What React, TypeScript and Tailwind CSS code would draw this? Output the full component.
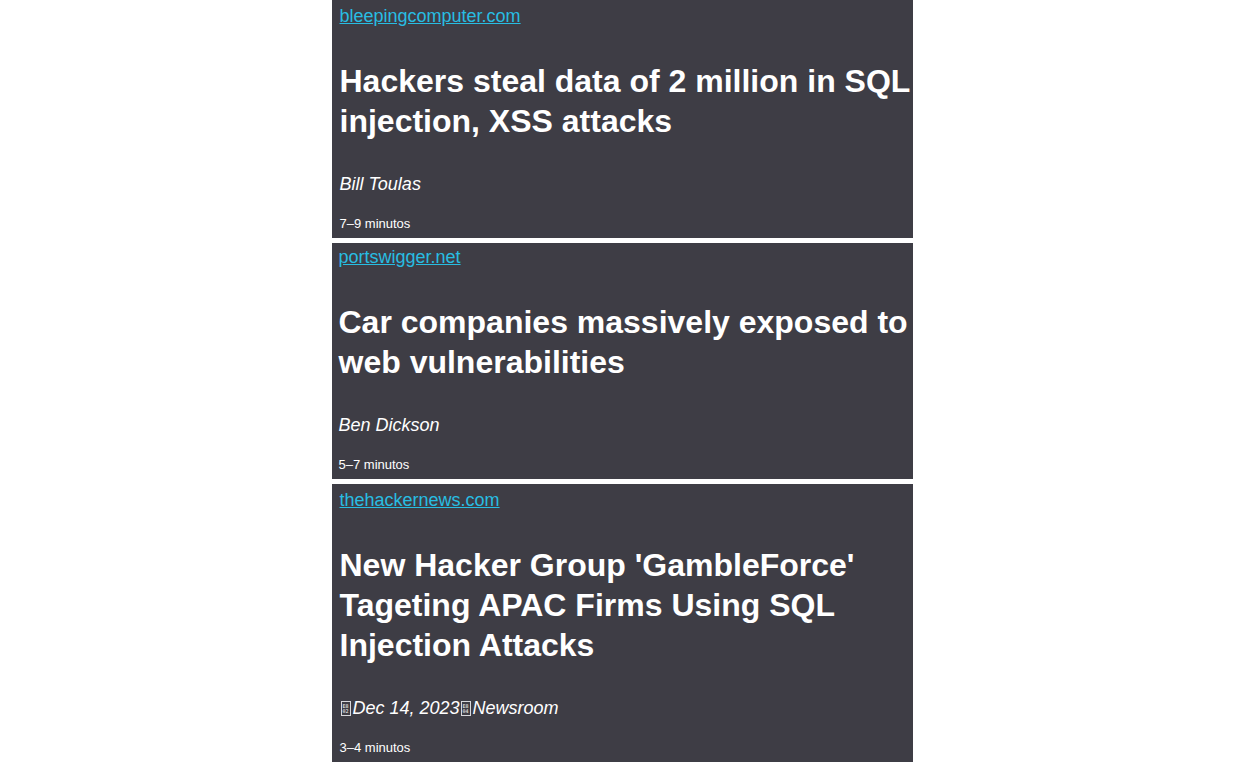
const articles = [
  {
    site: "bleepingcomputer.com",
    title: "Hackers steal data of 2 million in SQL injection, XSS attacks",
    byline: ["Bill Toulas"],
    time: "7–9 minutos",
    top: "pt-[6px]",
    left: "pl-2",
  },
  {
    site: "portswigger.net",
    title: "Car companies massively exposed to web vulnerabilities",
    byline: ["Ben Dickson"],
    time: "5–7 minutos",
    top: "pt-[4px]",
    left: "pl-[7px]",
  },
  {
    site: "thehackernews.com",
    title: "New Hacker Group 'GambleForce' Tageting APAC Firms Using SQL Injection Attacks",
    byline: ["E802", "Dec 14, 2023", "E804", "Newsroom"],
    time: "3–4 minutos",
    top: "pt-[6px]",
    left: "pl-2",
  },
]

// missing-glyph box like the browser draws for private-use chars
function Tofu({ code }: { code: string }) {
  return (
    <span className="flex flex-col items-center justify-center gap-px shrink-0 w-[10px] min-w-[10px] h-[15px] ml-px mr-[2px] border border-[#d8d8dc] not-italic leading-[4px] text-[5px] font-['DejaVu_Sans_Mono',monospace] text-white">
      <span>{code.slice(0, 2)}</span>
      <span>{code.slice(2)}</span>
    </span>
  )
}

export default function App() {
  return (
    <div className="min-h-screen bg-white flex justify-center font-['Liberation_Sans',Arial,sans-serif]">
      <div className="w-[581px] flex flex-col gap-[5px]">
        {articles.map((a) => (
          <div key={a.site} className={`bg-[#3e3d45] text-white pb-[6px] ${a.top} ${a.left}`}>
            <a href="#" className="block text-[18px] leading-[20px] text-[#28bde2] underline">
              <span>{a.site}</span>
            </a>
            <h1 className="mt-[35px] text-[32px] leading-[40px] font-bold">{a.title}</h1>
            <div className="mt-[33px] text-[18px] leading-[20px] italic flex items-center">
              {a.byline.map((b, i) =>
                b.startsWith("E8") ? <Tofu key={i} code={b} /> : <span key={i}>{b}</span>
              )}
            </div>
            <div className="mt-[22px] text-[13px] leading-[16px]">{a.time}</div>
          </div>
        ))}
      </div>
    </div>
  )
}
